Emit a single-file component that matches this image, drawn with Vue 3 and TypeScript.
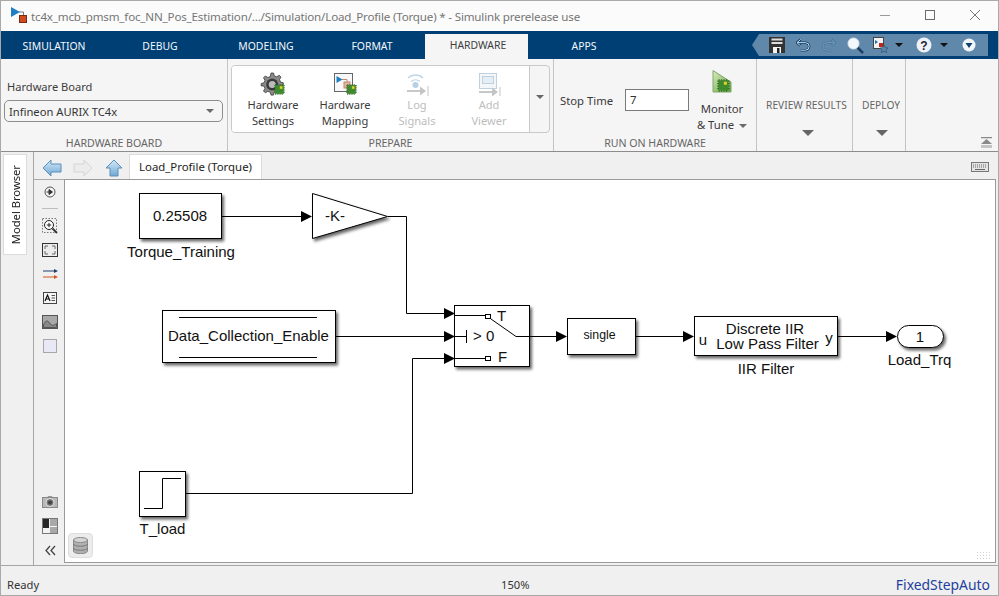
<script setup lang="ts">
const tabs: string[] = ['SIMULATION', 'DEBUG', 'MODELING', 'FORMAT', 'HARDWARE', 'APPS']
</script>

<template>
  <div class="window">
    <svg class="defs" width="0" height="0">
      <defs>
        <filter id="shadow" x="-15%" y="-15%" width="135%" height="140%">
          <feDropShadow dx="2" dy="2.5" stdDeviation="1.4" flood-color="#000" flood-opacity="0.6" />
        </filter>
        <linearGradient id="arrowBlue" x1="0" y1="0" x2="0" y2="1">
          <stop offset="0" stop-color="#d5e9f7" />
          <stop offset="1" stop-color="#6ea8d6" />
        </linearGradient>
        <linearGradient id="monitorGreen" x1="0" y1="0" x2="1" y2="1">
          <stop offset="0" stop-color="#dcecc0" />
          <stop offset="1" stop-color="#5fa03a" />
        </linearGradient>
        <symbol id="chip" viewBox="0 0 12 12">
          <path d="M1 2.500h10M1 4.500h10M1 6.500h10M1 8.500h10M2.500 1v10M4.500 1v10M6.500 1v10M8.500 1v10" stroke="#2e5c22" stroke-width=".8" />
          <rect x="2" y="2" width="8" height="8" fill="#3e8a2e" />
          <rect x="6.300" y="3" width="2.400" height="2.400" fill="#e8d020" />
        </symbol>
      </defs>
    </svg>

    <header class="title">
      <svg class="logo" width="18" height="18" viewBox="0 0 18 18">
        <path d="M9 5h4.500v6" fill="none" stroke="#7a7a7a" />
        <path d="M1 0l9 5-9 5z" fill="#1f7fc4" />
        <rect x="9.500" y="8.500" width="7" height="7" fill="#cf4a1c" stroke="#7a2c10" />
      </svg>
      <span class="title-text">tc4x_mcb_pmsm_foc_NN_Pos_Estimation/.../Simulation/Load_Profile (Torque) * - Simulink prerelease use</span>
      <div class="win-controls">
        <svg width="12" height="12" viewBox="0 0 12 12"><path d="M1 5.500h10" stroke="#9a9a9a" /></svg>
        <svg width="12" height="12" viewBox="0 0 12 12"><rect x="1.500" y=".5" width="9" height="9" fill="none" stroke="#6a6a6a" /></svg>
        <svg width="12" height="12" viewBox="0 0 12 12"><path d="M1 0l10 10M11 0L1 10" stroke="#777" /></svg>
      </div>
    </header>

    <nav class="tabstrip">
      <div v-for="t in tabs" :key="t" class="tab" :class="{ active: t === 'HARDWARE' }">{{ t }}</div>
      <div class="qab">
        <svg width="16" height="16" viewBox="0 0 16 16">
          <path d="M0 0h16v16H0z" fill="#333" /><rect x="2.500" y="1.500" width="11" height="2" fill="#ddd" /><rect x="2.500" y="5" width="11" height="2" fill="#ddd" /><rect x="4" y="10" width="8" height="6" fill="#f4f4f4" /><rect x="8" y="11" width="2.500" height="5" fill="#222" />
        </svg>
        <svg class="gap-1" width="15" height="14" viewBox="0 0 16 14"><path d="M5 1L1 4.500 5 8M1.500 4.500H10a4 4 0 0 1 0 8H5" fill="none" stroke="#103c66" stroke-width="2.600" /><path d="M5 1L1 4.500 5 8M1.500 4.500H10a4 4 0 0 1 0 8H5" fill="none" stroke="#d4e8f6" stroke-width="1" /></svg>
        <svg class="gap-2" width="15" height="14" viewBox="0 0 16 14"><path d="M11 1l4 3.500L11 8M14.500 4.500H6a4 4 0 0 0 0 8h5" fill="none" stroke="#4a7698" stroke-width="2.600" /><path d="M11 1l4 3.500L11 8M14.500 4.500H6a4 4 0 0 0 0 8h5" fill="none" stroke="#79a0bd" stroke-width="1" /></svg>
        <svg class="gap-3" width="17" height="17" viewBox="0 0 17 17"><path d="M10.500 10.500L16 16" stroke="#1d3f66" stroke-width="2.500" /><circle cx="6.500" cy="6.500" r="5.500" fill="#f5f8fb" stroke="#d8e6f0" /></svg>
        <svg class="gap-4" width="15" height="16" viewBox="0 0 15 16"><rect x=".5" y=".5" width="10" height="11" fill="#f3f3f3" stroke="#444" /><path d="M2 3l3 2-3 2z" fill="#1f6fb0" /><rect x="6" y="6" width="4" height="4" fill="#c2281a" /><path d="M11 8l1.200 2.600 2.800.3-2 1.900.6 2.800-2.600-1.400-2.600 1.400.6-2.800-2-1.900 2.800-.3z" fill="#5b87ad" stroke="#28496a" stroke-width=".6" /></svg>
        <i class="qab-caret gap-5"></i>
        <svg class="gap-6" width="16" height="16" viewBox="0 0 16 16"><circle cx="8" cy="8" r="7.500" fill="#eef2f6" /><text x="8" y="12.500" text-anchor="middle" class="q-mark">?</text></svg>
        <i class="qab-caret gap-8"></i>
        <svg class="gap-7" width="14" height="14" viewBox="0 0 14 14"><circle cx="7" cy="7" r="6.500" fill="#f3f6f9" /><path d="M3.500 5h7L7 10z" fill="#0e4170" /></svg>
      </div>
    </nav>

    <section class="ribbon">
      <div class="sec sec-board">
        <div class="sec-body board-body">
          <div class="board-label">Hardware Board</div>
          <div class="select"><span>Infineon AURIX TC4x</span><i class="caret"></i></div>
        </div>
        <div class="sec-foot">HARDWARE BOARD</div>
      </div>

      <div class="sec sec-prepare">
        <div class="sec-body">
          <div class="gallery">
            <div class="gal-items">
              <div class="gal-item">
                <svg class="gal-icon" width="26" height="24" viewBox="0 0 26 24">
                  <path d="M11 1l2.500 0 .7 2.800 2.500 1 2.500-1.500 1.800 1.800-1.500 2.500 1 2.500 2.800.7v2.500l-2.800.7-1 2.500 1.500 2.500-1.800 1.800-2.500-1.500-2.500 1-.7 2.800H11l-.7-2.800-2.500-1-2.500 1.500-1.800-1.800 1.500-2.500-1-2.500L1.200 14v-2.500L4 10.800l1-2.500L3.500 5.800 5.300 4l2.500 1.500 2.500-1z" fill="#8a8a8a" stroke="#3a3a3a" stroke-width=".8" />
                  <circle cx="12.200" cy="12.500" r="6" fill="#3a3a3a" /><circle cx="12.200" cy="12.500" r="3.500" fill="#bbb" />
                  <use href="#chip" x="13" y="11" width="13" height="13" />
                </svg>
                <div>Hardware</div><div>Settings</div>
              </div>
              <div class="gal-item">
                <svg class="gal-icon" width="26" height="24" viewBox="0 0 26 24">
                  <rect x="2.500" y="1.500" width="18" height="18" fill="#f8f8f8" stroke="#666" />
                  <path d="M4.500 4l6 3.500-6 3.500z" fill="#1f7fc4" /><path d="M10 7.500h5v4" fill="none" stroke="#c08870" /><rect x="12" y="10" width="6" height="6" fill="#e6b5a0" stroke="#c08870" />
                  <use href="#chip" x="13" y="11" width="13" height="13" />
                </svg>
                <div>Hardware</div><div>Mapping</div>
              </div>
              <div class="gal-item disabled">
                <svg class="gal-icon" width="26" height="24" viewBox="0 0 26 24">
                  <path d="M4 6a11 11 0 0 1 15 0M7 9.500a7 7 0 0 1 9 0" fill="none" stroke="#c0d6e6" stroke-width="1.400" />
                  <circle cx="11.500" cy="13" r="3" fill="#b8d0e4" /><path d="M3 19h15" stroke="#c8c8c8" stroke-width="2" /><path d="M16 14.500l6 4.500-6 4.500z" fill="#c4c4c4" /><path d="M24 14v10" stroke="#c4c4c4" />
                </svg>
                <div>Log</div><div>Signals</div>
              </div>
              <div class="gal-item disabled">
                <svg class="gal-icon" width="26" height="24" viewBox="0 0 26 24">
                  <rect x="3.500" y="1.500" width="17" height="15" fill="#f4f7fa" stroke="#bfd0de" /><rect x="6.500" y="4.500" width="11" height="7" fill="#e6eef5" stroke="#bfd0de" /><path d="M3 20h15" stroke="#c8c8c8" stroke-width="2" /><path d="M16 15.500l6 4.500-6 4.500z" fill="#c4c4c4" /><path d="M24 15v10" stroke="#c4c4c4" />
                </svg>
                <div>Add</div><div>Viewer</div>
              </div>
            </div>
            <div class="gal-more"><i class="caret"></i></div>
          </div>
        </div>
        <div class="sec-foot">PREPARE</div>
      </div>

      <div class="sec sec-run">
        <div class="sec-body run-body">
          <span class="stop-label">Stop Time</span>
          <div class="stop-input">7</div>
          <div class="monitor">
            <svg width="22" height="24" viewBox="0 0 22 24">
              <path d="M2 0.500L20 12 20 22H2z" fill="url(#monitorGreen)" stroke="#7ea866" />
              <use href="#chip" x="5" y="8" width="15" height="15" />
            </svg>
            <div class="mon-line">Monitor</div>
            <div class="mon-line">&amp; Tune <i class="caret"></i></div>
          </div>
        </div>
        <div class="sec-foot">RUN ON HARDWARE</div>
      </div>

      <div class="sec sec-review">
        <div class="collapsed-label">REVIEW RESULTS</div>
        <i class="big-caret"></i>
      </div>
      <div class="sec sec-deploy">
        <div class="collapsed-label">DEPLOY</div>
        <i class="big-caret"></i>
      </div>
      <div class="sec-rest">
        <svg width="11" height="11" viewBox="0 0 11 11"><path d="M0 .5h11" stroke="#8a8a8a" stroke-width="1.500" /><path d="M5.500 2L11 7H0z" fill="#8a8a8a" /><path d="M0 9.500h11" stroke="#c4c4c4" stroke-width="3" /></svg>
      </div>
    </section>

    <main class="editor">
      <aside class="rail"><div class="browser-tab"><span>Model Browser</span></div></aside>
      <div class="work">
        <div class="docbar">
          <svg class="nav" width="20" height="18" viewBox="0 0 20 18"><path d="M1 9l8-8v4h10v8H9v4z" fill="url(#arrowBlue)" stroke="#5a8fb8" /></svg>
          <svg class="nav nav-fwd" width="20" height="18" viewBox="0 0 20 18"><path d="M19 9l-8-8v4H1v8h10v4z" fill="#ececec" stroke="#d4d4d4" /></svg>
          <svg class="nav nav-up" width="18" height="18" viewBox="0 0 18 18"><path d="M9 1l8 8h-4v8H5V9H1z" fill="url(#arrowBlue)" stroke="#5a8fb8" /></svg>
          <div class="doc-tab">Load_Profile (Torque)</div>
          <svg class="kbd" width="18" height="10" viewBox="0 0 18 10">
            <rect x=".5" y=".5" width="17" height="9" fill="#e4e4e4" stroke="#777" />
            <path d="M2 3h14M2 5h14" stroke="#666" stroke-dasharray="1 1" /><path d="M4 7.500h10" stroke="#666" />
          </svg>
        </div>
        <div class="stage">
          <div class="tools">
            <div class="tool"><svg width="12" height="12" viewBox="0 0 12 12"><circle cx="6" cy="6" r="5" fill="#f4f4f4" stroke="#555" /><path d="M2.500 6h4M5 3.500L8.500 6 5 8.500z" fill="#333" stroke="#333" /></svg></div>
            <div class="tool-sep"></div>
            <div class="tool"><svg width="16" height="16" viewBox="0 0 16 16"><rect x=".5" y=".5" width="14" height="14" fill="none" stroke="#777" stroke-dasharray="1.500 1.500" /><circle cx="7" cy="7" r="4.500" fill="#fff" stroke="#222" /><path d="M10.500 10.500l4.500 4.500" stroke="#333" stroke-width="1.800" /><path d="M4.800 7h4.400M7 4.800v4.400" stroke="#222" /></svg></div>
            <div class="tool"><svg width="16" height="14" viewBox="0 0 16 14"><rect x=".5" y=".5" width="15" height="13" fill="#ececec" stroke="#333" /><path d="M3 6V3h3M10 3h3v3M13 8v3h-3M6 11H3V8" fill="none" stroke="#666" /></svg></div>
            <div class="tool"><svg width="15" height="10" viewBox="0 0 15 10"><path d="M0 2h12" stroke="#1f3f6a" /><path d="M11 0l4 2-4 2z" fill="#1f3f6a" /><path d="M0 8h12" stroke="#d4561f" /><path d="M11 6l4 2-4 2z" fill="#d4561f" /></svg></div>
            <div class="tool"><svg width="14" height="12" viewBox="0 0 14 12"><rect x=".5" y=".5" width="13" height="11" fill="#f5f5f5" stroke="#444" /><path d="M2 9l2.500-6L7 9M3 7h3" fill="none" stroke="#111" stroke-width="1.200" /><path d="M8.500 3.500H12M8.500 6H12M8.500 8.500H12" stroke="#555" /></svg></div>
            <div class="tool"><svg width="16" height="14" viewBox="0 0 16 14"><rect x=".5" y=".5" width="15" height="13" fill="#a8a8a8" stroke="#555" /><path d="M1.500 10c2-5 4-5 6-2s4 3 7 .5V12.500H1.500z" fill="#8a8a8a" stroke="#555" /></svg></div>
            <div class="tool"><svg width="14" height="14" viewBox="0 0 14 14"><rect x=".5" y=".5" width="13" height="13" fill="#e8e8f6" stroke="#a8a8a8" /></svg></div>
            <div class="tools-end">
              <div class="tool"><svg width="16" height="12" viewBox="0 0 16 12"><path d="M5 1.500l1-1h4l1 1" fill="none" stroke="#999" /><rect x=".5" y="1.500" width="15" height="10" fill="#b8b8b8" stroke="#8a8a8a" /><circle cx="8" cy="6.500" r="4" fill="#777" stroke="#e4e4e4" /><circle cx="8" cy="6.500" r="2" fill="#444" /></svg></div>
              <div class="tool"><svg width="16" height="16" viewBox="0 0 16 16"><rect x=".5" y=".5" width="15" height="15" fill="#a8a8a8" stroke="#777" /><rect x="1" y="1" width="6" height="9" fill="#262626" /><rect x="1" y="10" width="6" height="5" fill="#f2f2f2" /><rect x="8" y="8" width="7" height="1" fill="#f4f4f4" /><rect x="7" y="1" width="1" height="14" fill="#f2f2f2" /></svg></div>
              <div class="tool"><svg width="11" height="11" viewBox="0 0 11 11"><path d="M5 1L1 5.500 5 10M10 1L6 5.500 10 10" fill="none" stroke="#444" stroke-width="1.300" /></svg></div>
            </div>
          </div>

          <div class="canvas">
            <svg class="diagram" width="930" height="382" viewBox="65 180 930 382">
              <g class="wires">
                <path d="M222 216.500H302" />
                <path d="M388 216.500H406.500V313.500H445" />
                <path d="M335 336.500H445" />
                <path d="M185 493.500H412.500V358.500H445" />
                <path d="M530 336.500H557" />
                <path d="M635 336.500H684" />
                <path d="M838 336.500H887" />
              </g>
              <g class="heads">
                <path d="M301 211l11 5.500-11 5.500z" />
                <path d="M444 308l11 5.500-11 5.500z" />
                <path d="M444 331l11 5.500-11 5.500z" />
                <path d="M444 353l11 5.500-11 5.500z" />
                <path d="M556 331l11 5.500-11 5.500z" />
                <path d="M683 331l11 5.500-11 5.500z" />
                <path d="M886 331l11 5.500-11 5.500z" />
              </g>

              <g class="block">
                <rect x="139.500" y="193.500" width="82" height="45" />
                <polygon points="312.500,193.500 387.500,216.500 312.500,238.500" />
                <rect x="162.500" y="310.500" width="173" height="52" />
                <rect x="454.500" y="305.500" width="75" height="61" />
                <rect x="567.500" y="318.500" width="68" height="36" />
                <rect x="694.500" y="316.500" width="143" height="39" />
                <rect x="897.500" y="325.500" width="46" height="22" rx="11" />
                <rect x="139.500" y="471.500" width="46" height="45" />
              </g>

              <g class="inner">
                <path d="M179 317.500H317M179 357.500H317" stroke="#444" />
                <path d="M144 508.500H162.500V478.500H181" />
                <path d="M455 315.500H485M491 319L516 336.500H530M455 336.500H466M466.500 330V343M455 358.500H485" />
                <rect class="port" x="485.500" y="314.500" width="5" height="4" />
                <rect class="port" x="485.500" y="356.500" width="5" height="4" />
              </g>

              <text class="t15 mid" x="180" y="221">0.25508</text>
              <text class="t15 mid" x="181" y="257">Torque_Training</text>
              <text class="t15 mid" x="335" y="221">-K-</text>
              <text class="t15 mid" x="248.500" y="341">Data_Collection_Enable</text>
              <text class="t15" x="497" y="321">T</text>
              <text class="t15" x="473" y="341">&gt; 0</text>
              <text class="t15" x="498" y="362">F</text>
              <text class="t12 mid" x="599.500" y="339">single</text>
              <text class="t15 mid" x="765" y="334">Discrete IIR</text>
              <text class="t15 mid" x="767.500" y="349">Low Pass Filter</text>
              <text class="t15 mid" x="703" y="345">u</text>
              <text class="t15 mid" x="829" y="343">y</text>
              <text class="t15 mid" x="766" y="374">IIR Filter</text>
              <text class="t15 mid" x="920" y="342">1</text>
              <text class="t15 mid" x="919.500" y="365">Load_Trq</text>
              <text class="t15 mid" x="162.500" y="534">T_load</text>
            </svg>
            <div class="db-btn">
              <svg width="15" height="17" viewBox="0 0 15 17"><path d="M.5 3v11c0 3.500 14 3.500 14 0V3z" fill="#b0b0b0" stroke="#8a8a8a" /><ellipse cx="7.500" cy="3" rx="7" ry="2.500" fill="#d4d4d4" stroke="#8a8a8a" /><path d="M.5 7c0 3 14 3 14 0M.5 11c0 3 14 3 14 0" fill="none" stroke="#777" /></svg>
            </div>
            <div class="grip"></div>
          </div>
        </div>
      </div>
    </main>

    <footer class="status">
      <span class="st-left">Ready</span>
      <span class="st-mid">150%</span>
      <span class="st-right">FixedStepAuto</span>
    </footer>
  </div>
</template>

<style>
html, body { margin: 0; padding: 0; background: #fff; }
</style>

<style scoped>
.window {
  box-sizing: border-box;
  width: 999px;
  height: 596px;
  border: 1px solid #a9a9a9;
  display: flex;
  flex-direction: column;
  overflow: hidden;
  font-family: "Noto Sans", "Open Sans", sans-serif;
  font-size: 11.2px;
  color: #333;
  background: #f0f0f0;
}
.defs { position: absolute; }
.title { height: 30px; flex: none; display: flex; align-items: center; background: #fbfbfb; }
.logo { margin: 6px 0 0 9px; flex: none; align-self: flex-start; }
.title-text { margin-left: 3px; font-size: 11.6px; letter-spacing: -0.18px; color: #767676; white-space: nowrap; }
.win-controls { margin-left: auto; margin-right: 17px; display: flex; gap: 33px; }
.tabstrip { height: 28px; flex: none; background: #003f73; display: flex; position: relative; }
.tab { width: 106px; flex: none; padding-top: 1px; box-sizing: border-box; height: 28px; display: flex; align-items: center; justify-content: center; color: #f4f8fb; font-size: 10.4px; }
.tab.active { margin-top: 3px; height: 25px; padding: 0 0 3px 3px; background: #f5f5f5; color: #3d3d3d; width: 103px; margin-right: 3px; }
.qab { margin-left: auto; margin-right: 10px; margin-top: 3px; height: 22px; width: 229px; position: relative; background: #5f88aa; display: flex; align-items: center; padding-left: 10px; box-sizing: border-box; }
.qab::before { content: ""; position: absolute; left: -7px; top: 0; border-style: solid; border-width: 11px 7px 11px 0; border-color: transparent #5f88aa transparent transparent; }
.gap-1 { margin-left: 11px; }
.gap-2 { margin-left: 10px; }
.gap-3 { margin-left: 11px; }
.gap-4 { margin-left: 9px; }
.gap-5 { margin-left: 7px; }
.gap-6 { margin-left: 13px; }
.gap-8 { margin-left: 8px; }
.gap-7 { margin-left: 14px; }
.qab-caret { width: 0; height: 0; border-style: solid; border-width: 4px 4px 0; border-color: #111 transparent transparent; }
.q-mark { font: bold 12px "Liberation Sans", sans-serif; fill: #223; }
.ribbon { height: 92px; flex: none; display: flex; background: #f5f5f5; border-bottom: 1px solid #8c8c8c; }
.sec { box-sizing: border-box; height: 92px; flex: none; display: flex; flex-direction: column; border-right: 1px solid #c4c4c4; }
.sec-body { flex: 1; min-height: 0; }
.sec-foot { height: 16px; flex: none; text-align: center; font-size: 10.6px; color: #666; line-height: 16px; }
.sec-board { width: 227px; padding: 0 3px; }
.board-body { padding-top: 20px; box-sizing: border-box; }
.board-label { height: 16px; line-height: 16px; padding-left: 3px; font-size: 11.1px; color: #3c3c3c; }
.select { margin-top: 5px; box-sizing: border-box; width: 219px; height: 22px; border: 1px solid #8d8d8d; border-radius: 5px; display: flex; align-items: center; justify-content: space-between; padding: 0 8px 0 4px; font-size: 11.2px; }
.caret { display: inline-block; width: 0; height: 0; border-style: solid; border-width: 4px 4px 0; border-color: #6a6a6a transparent transparent; vertical-align: middle; }
.sec-prepare { width: 326px; padding: 6px 3px 0; }
.gallery { box-sizing: border-box; height: 68px; width: 319px; border: 1px solid #c9c9c9; border-radius: 4px; display: flex; }
.gal-items { width: 298px; box-sizing: border-box; background: #fff; border-right: 1px solid #c9c9c9; padding-left: 5px; display: flex; border-radius: 3px 0 0 3px; }
.gal-item { width: 72px; text-align: center; line-height: 16px; font-size: 11.1px; color: #3a3a3a; padding-top: 6px; box-sizing: border-box; }
.gal-icon { display: block; margin: 0 auto 1px; height: 24px; }
.gal-item.disabled { color: #bdbdbd; }
.gal-more { flex: 1; display: flex; align-items: center; justify-content: center; padding-bottom: 5px; }
.gal-more .caret { border-color: #666 transparent transparent; }
.sec-run { width: 203px; }
.run-body { display: flex; padding-left: 6px; }
.stop-label { width: 65px; height: 22px; margin-top: 31px; line-height: 22px; font-size: 11.3px; color: #3a3a3a; flex: none; }
.stop-input { box-sizing: border-box; width: 64px; height: 22px; margin-top: 30px; background: #fff; border: 1px solid #7a7a7a; padding-left: 4px; line-height: 20px; font-size: 11.4px; flex: none; }
.monitor { width: 66px; flex: none; text-align: center; padding-top: 11px; box-sizing: border-box; }
.monitor svg { display: block; margin: 0 auto 7px; }
.mon-line { line-height: 16px; font-size: 11.3px; color: #3a3a3a; white-space: nowrap; }
.mon-line .caret { margin-left: 2px; }
.collapsed-label { margin-top: 38px; text-align: center; font-size: 10.2px; color: #666; line-height: 16px; white-space: nowrap; }
.big-caret { display: block; width: 0; height: 0; margin: 17px 0 0 calc(50% - 5px); border-style: solid; border-width: 6px 6px 0; border-color: #666 transparent transparent; }
.sec-review { width: 96px; padding-left: 4px; }
.sec-deploy { width: 53px; padding-left: 4px; }
.sec-rest { flex: 1; display: flex; justify-content: flex-end; align-items: flex-end; padding: 0 6px 3px 0; }
.editor { flex: 1; min-height: 0; display: flex; background: #f0f0f0; }
.rail { width: 33px; box-sizing: border-box; flex: none; border-right: 1px solid #a6a6a6; padding: 2px 0 0 2px; }
.browser-tab { box-sizing: border-box; width: 24px; height: 101px; background: #fff; border: 1px solid #dcdcdc; display: flex; align-items: center; justify-content: center; }
.browser-tab span { writing-mode: vertical-rl; transform: rotate(180deg); font-size: 11.2px; color: #222; white-space: nowrap; }
.work { flex: 1; min-width: 0; display: flex; flex-direction: column; }
.docbar { height: 27px; flex: none; display: flex; align-items: flex-start; }
.nav { margin: 7px 0 0 8px; flex: none; }
.nav-fwd { margin-left: 11px; }
.nav-up { margin-left: 12px; }
.doc-tab { box-sizing: border-box; margin: 2px 0 0 6px; width: 133px; height: 25px; background: #fff; border: 1px solid #dcdcdc; border-bottom: 0; font-size: 11.4px; color: #222; text-align: center; line-height: 24px; flex: none; }
.kbd { margin: 10px 9px 0 auto; }
.stage { flex: 1; min-height: 0; display: flex; align-items: flex-start; }
.tools { width: 30px; height: 100%; flex: none; display: flex; flex-direction: column; align-items: center; padding: 0 0 3px 2px; box-sizing: border-box; border-top: 1px solid #a9a9a9; }
.tool { height: 24px; width: 28px; flex: none; display: flex; align-items: center; justify-content: center; }
.tool-sep { height: 1px; width: 16px; background: #bdbdbd; margin: 4px 0 5px; flex: none; }
.tools-end { margin-top: auto; }
.canvas { position: relative; box-sizing: border-box; width: 932px; height: 384px; background: #fff; border: 1px solid #9a9a9a; flex: none; }
.diagram { display: block; }
.wires path { fill: none; stroke: #000; stroke-width: 1; }
.heads path { fill: #000; }
.block rect, .block polygon { fill: #fff; stroke: #000; stroke-width: 1; filter: url(#shadow); }
.inner path { fill: none; stroke: #000; stroke-width: 1; }
.inner .port { fill: #fff; stroke: #000; stroke-width: 1; }
.t15 { font: 15px "Liberation Sans", Arial, sans-serif; fill: #111; }
.t12 { font: 12.3px "Liberation Sans", Arial, sans-serif; fill: #111; }
.mid { text-anchor: middle; }
.db-btn { position: absolute; left: 3px; bottom: 4px; box-sizing: border-box; width: 25px; height: 25px; border-radius: 4px; background: #ececec; border: 1px solid #dedede; display: flex; align-items: center; justify-content: center; }
.grip { position: absolute; right: 5px; bottom: 1px; width: 14px; height: 10px; background-image: radial-gradient(#d0d0d0 0.7px, transparent 0.8px); background-size: 3px 3px; }
.status { height: 30px; flex: none; box-sizing: border-box; border-top: 1px solid #a6a6a6; background: #f0f0f0; display: flex; padding-top: 11px; line-height: 16px; font-size: 11.2px; color: #333; position: relative; }
.st-left { padding-left: 6px; }
.st-mid { position: absolute; left: 500px; }
.st-right { margin-left: auto; margin-right: 8px; color: #1f3f9e; font-size: 13.9px; }
</style>
